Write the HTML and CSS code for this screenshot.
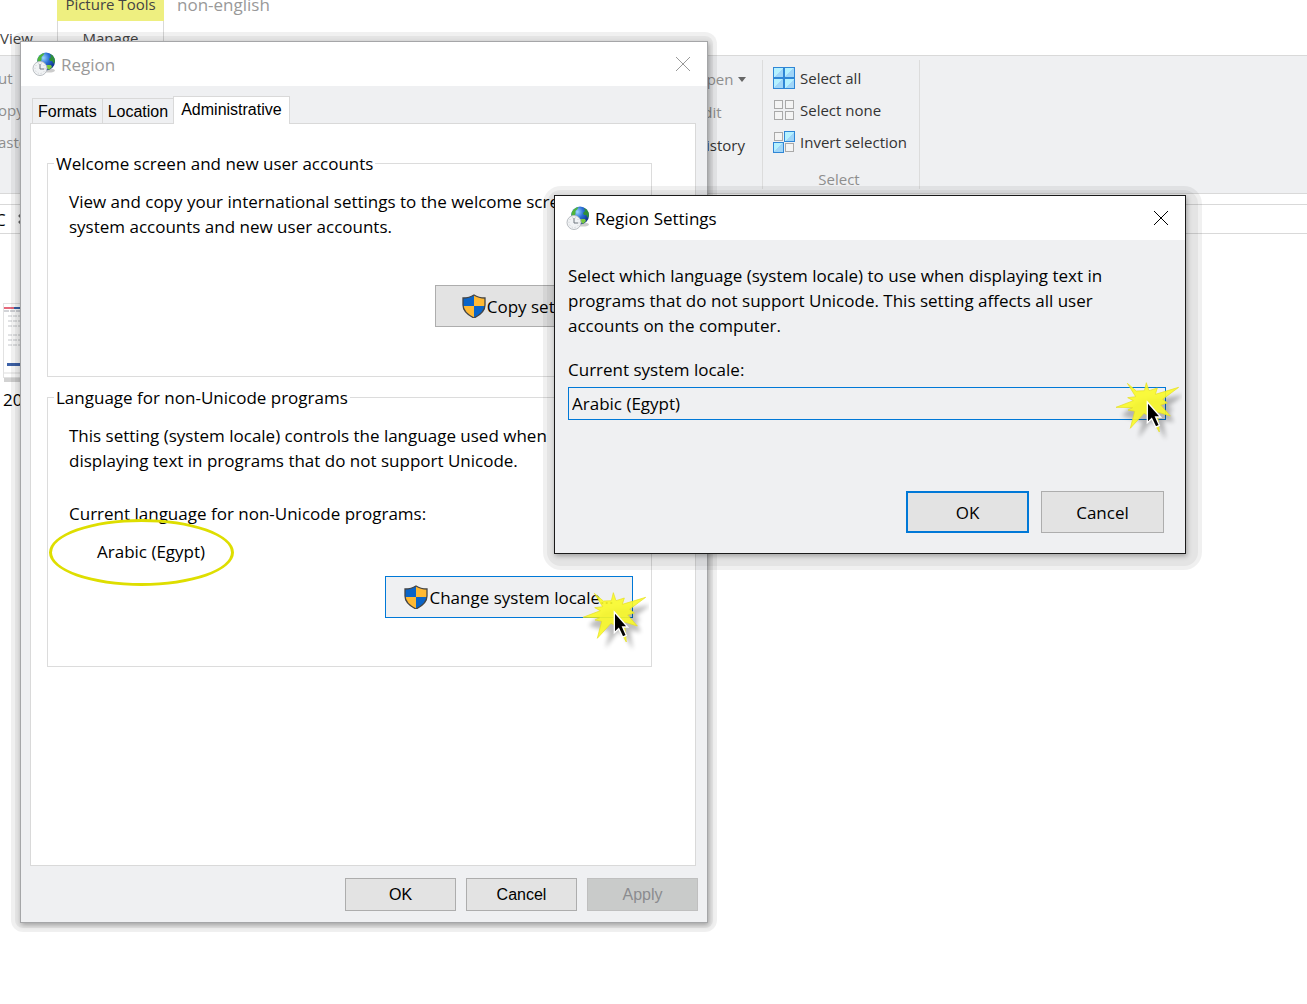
FILE: index.html
```html
<!DOCTYPE html>
<html lang="en">
<head>
    <meta charset="UTF-8">
    <meta name="viewport" content="width=device-width, initial-scale=1.0">
    <title>Region Settings</title>
    <link rel="stylesheet" href="styles.css">
</head>
<body>

    <!-- shared icons -->
    <svg class="defs" width="0" height="0" aria-hidden="true">
        <defs>
            <radialGradient id="sea" cx="0.35" cy="0.3" r="0.75">
                <stop offset="0" stop-color="#9bd6ff"/>
                <stop offset="0.45" stop-color="#2a6fd6"/>
                <stop offset="1" stop-color="#0b2a86"/>
            </radialGradient>
            <linearGradient id="pane" x1="0" y1="0" x2="1" y2="1">
                <stop offset="0.5" stop-color="#b5f1ff"/>
                <stop offset="0.5" stop-color="#9fd5f8"/>
            </linearGradient>
            <symbol id="globe" viewBox="0 0 24 24">
                <ellipse cx="17" cy="18.500" rx="6" ry="2" fill="#000" opacity="0.2"/>
                <circle cx="14" cy="9.500" r="9" fill="url(#sea)"/>
                <path d="M5.500 7c1-3 4-5.500 7-6l-1 2-2 2v3l-2 3-2 1z" fill="#4fb53a"/>
                <path d="M18 2c3 1 5 4 5 7l-1 3-2-3-2 0-1-2 2-2z" fill="#2f8f3a"/>
                <path d="M15 13l4 0 1 2-3 3-2-2z" fill="#79c93f"/>
                <circle cx="8" cy="16.500" r="7" fill="#f1f3f5" stroke="#b9bdc2"/>
                <circle cx="8" cy="16.500" r="5" fill="none" stroke="#c9cdd1" stroke-dasharray="1 2"/>
                <path d="M8 12v5h4" fill="none" stroke="#6f777e"/>
            </symbol>
            <symbol id="shield" viewBox="0 0 24 24">
                <path d="M12 1C9 3 5 4 1 4v7c0 6 5 10 11 13z" fill="#0a64c8"/>
                <path d="M12 1c3 2 7 3 11 3v7c0 6-5 10-11 13z" fill="#ffb933"/>
                <path d="M1 12h11v12C6 21 1 17 1 12z" fill="#ffb933"/>
                <path d="M12 12h11c0 5-5 9-11 12z" fill="#0a64c8"/>
                <path d="M12 1C9 3 5 4 1 4v7c0 6 5 10 11 13 6-3 11-7 11-13V4c-4 0-8-1-11-3z" fill="none" stroke="#454545" stroke-width="1.300"/>
            </symbol>
            <symbol id="cross" viewBox="0 0 16 16">
                <path d="M1 1l14 14M15 1L1 15" fill="none" stroke="currentColor"/>
            </symbol>
            <symbol id="click" viewBox="100 60 210 189">
                <path class="burst-shadow" d="M172 115l45-8 25 0 68-10-45 35 18 10-15 5 14 32-32-6 8 58-25-42-20-12-38 50 12-50-62-18z"/>
                <path d="M146 70l27 23 24-1 6-24 8 24 25-8-6 19 70-21-48 36 14 11-20 6 29 33-39-12 6 60-27-46-19-10-41 45 13-51-20-4 14-7-50-1 52-20-17-9 24-3z" fill="#fafa28" fill-opacity="0.9" stroke="#e6e01a" stroke-width="2"/>
                <path d="M206 126v62l13-12 12 25 11-5-11-25h15z" fill="#000" stroke="#fff" stroke-width="4"/>
            </symbol>
        </defs>
    </svg>

    <div class="explorer">
        <div class="explorer-tabs">
            <a href="#" class="view-tab">View</a>
            <div class="picture-tools">
                <div class="tools-label">Picture Tools</div>
                <a href="#" class="manage-tab">Manage</a>
            </div>
            <div class="explorer-title">non-english</div>
        </div>

        <div class="ribbon">
            <div class="ribbon-clipboard">
                <button type="button" class="ribbon-btn muted">ut</button>
                <button type="button" class="ribbon-btn muted">opy</button>
                <button type="button" class="ribbon-btn muted">aste</button>
            </div>
            <div class="ribbon-open">
                <button type="button" class="ribbon-btn muted">Open <span class="caret"></span></button>
                <button type="button" class="ribbon-btn muted">Edit</button>
                <button type="button" class="ribbon-btn">History</button>
            </div>
            <div class="ribbon-select">
                <button type="button" class="ribbon-btn">
                    <svg width="22" height="22" viewBox="0 0 22 22">
                        <g fill="url(#pane)" stroke="#2f86d6">
                            <rect x="0.500" y="0.500" width="10" height="10"/>
                            <rect x="11.500" y="0.500" width="10" height="10"/>
                            <rect x="0.500" y="11.500" width="10" height="10"/>
                            <rect x="11.500" y="11.500" width="10" height="10"/>
                        </g>
                    </svg>
                    Select all
                </button>
                <button type="button" class="ribbon-btn">
                    <svg width="22" height="22" viewBox="0 0 22 22">
                        <g fill="#f4f4f4" stroke="#a9a9a9">
                            <rect x="1.500" y="1.500" width="8" height="8"/>
                            <rect x="12.500" y="1.500" width="8" height="8"/>
                            <rect x="1.500" y="12.500" width="8" height="8"/>
                            <rect x="12.500" y="12.500" width="8" height="8"/>
                        </g>
                    </svg>
                    Select none
                </button>
                <button type="button" class="ribbon-btn">
                    <svg width="22" height="22" viewBox="0 0 22 22">
                        <g fill="#f4f4f4" stroke="#a9a9a9">
                            <rect x="1.500" y="1.500" width="8" height="8"/>
                            <rect x="12.500" y="12.500" width="8" height="8"/>
                        </g>
                        <g fill="url(#pane)" stroke="#2f86d6">
                            <rect x="11.500" y="0.500" width="10" height="10"/>
                            <rect x="0.500" y="11.500" width="10" height="10"/>
                        </g>
                    </svg>
                    Invert selection
                </button>
                <div class="ribbon-caption">Select</div>
            </div>
        </div>

        <div class="address-bar">
            <span>C</span>
            <svg width="10" height="10" viewBox="0 0 10 10"><path d="M1 1l8 8M9 1L1 9" stroke="#666" stroke-width="2.500"/></svg>
        </div>

        <div class="files">
            <svg class="thumb" width="56" height="80" viewBox="0 0 56 80">
                <rect x="1" y="3" width="54" height="76" fill="#d2d2d2"/>
                <rect x="0.500" y="0.500" width="53" height="74" fill="#fff" stroke="#e2e2e2"/>
                <path d="M1 5h10" stroke="#e66a7c" stroke-width="2"/>
                <path d="M11 5h36" stroke="#3a63a8" stroke-width="2"/>
                <path d="M1 8h50" stroke="#a5a8b0" stroke-dasharray="5 1"/>
                <path d="M5 13h40M5 18h40M5 23h40M5 32h40M5 37h40M5 42h40" stroke="#c4c6ca" stroke-dasharray="4 1"/>
                <rect x="4" y="60" width="46" height="3" fill="#3d62a8"/>
                <path d="M1 70h52" stroke="#ddd"/>
            </svg>
            <span>2019</span>
        </div>
    </div>

    <div class="dialog region-dialog">
        <div class="window">
            <div class="title-bar">
                <svg width="24" height="24"><use href="#globe"/></svg>
                <h1>Region</h1>
                <button type="button" class="close-btn" aria-label="Close"><svg width="16" height="16"><use href="#cross"/></svg></button>
            </div>

            <form class="region-body">
                <div class="tabs">
                    <button type="button" class="tab">Formats</button>
                    <button type="button" class="tab">Location</button>
                    <button type="button" class="tab active">Administrative</button>
                </div>

                <div class="panel">
                    <fieldset>
                        <legend>Welcome screen and new user accounts</legend>
                        <p>View and copy your international settings to the welcome screen,<br>system accounts and new user accounts.</p>
                        <div class="action copy-action">
                            <button type="button" class="btn shield-btn copy-btn"><svg width="24" height="24"><use href="#shield"/></svg>Copy settings...</button>
                        </div>
                    </fieldset>

                    <fieldset>
                        <legend>Language for non-Unicode programs</legend>
                        <p>This setting (system locale) controls the language used when<br>displaying text in programs that do not support Unicode.</p>
                        <p class="current-label">Current language for non-Unicode programs:</p>
                        <p class="current-language">Arabic (Egypt)<span class="ring"></span></p>
                        <div class="action">
                            <button type="button" class="btn shield-btn change-btn"><svg width="24" height="24"><use href="#shield"/></svg>Change system locale...</button>
                            <svg class="click-mark" width="70" height="63"><use href="#click"/></svg>
                        </div>
                    </fieldset>
                </div>

                <div class="region-buttons">
                    <button type="button" class="btn">OK</button>
                    <button type="button" class="btn">Cancel</button>
                    <button type="button" class="btn" disabled>Apply</button>
                </div>
            </form>
        </div>
    </div>

    <div class="dialog settings-dialog">
        <div class="window">
            <div class="title-bar">
                <svg width="24" height="24"><use href="#globe"/></svg>
                <h2>Region Settings</h2>
                <button type="button" class="close-btn" aria-label="Close"><svg width="16" height="16"><use href="#cross"/></svg></button>
            </div>

            <form class="settings-body">
                <p>Select which language (system locale) to use when displaying text in<br>programs that do not support Unicode. This setting affects all user<br>accounts on the computer.</p>
                <label for="locale">Current system locale:</label>
                <div class="locale-field">
                    <select id="locale">
                        <option>Arabic (Egypt)</option>
                    </select>
                    <svg class="click-mark" width="70" height="63"><use href="#click"/></svg>
                </div>
                <div class="settings-buttons">
                    <button type="button" class="btn default">OK</button>
                    <button type="button" class="btn">Cancel</button>
                </div>
            </form>
        </div>
    </div>

</body>
</html>
```
FILE: styles.css
```css
* {
    box-sizing: border-box;
    margin: 0;
    padding: 0;
}

body {
    position: relative;
    min-height: 100vh;
    overflow: hidden;
    background: #fff;
    color: #000;
    font-family: 'Open Sans', 'Noto Sans', sans-serif;
    font-size: 17px;
    line-height: 25px;
}

button,
select {
    font: inherit;
    color: inherit;
}

svg {
    display: block;
    flex: none;
}

a {
    color: inherit;
    text-decoration: none;
}

.defs {
    position: absolute;
}

/* file explorer */
.explorer-tabs {
    display: flex;
    height: 55px;
    font-size: 15px;
    color: #444;
}

.view-tab {
    width: 57px;
    padding-top: 26px;
}

.picture-tools {
    width: 107px;
    text-align: center;
}

.tools-label {
    height: 21px;
    background: #eeef80;
    line-height: 8px;
}

.manage-tab {
    display: block;
    height: 34px;
    padding-top: 5px;
    border: solid #d9d9d9;
    border-width: 0 1px;
}

.explorer-title {
    padding-left: 13px;
    color: #999;
    font-size: 17px;
    line-height: 10px;
}

.ribbon {
    display: flex;
    height: 139px;
    background: #eff0f2;
    border: solid #d9d9d9;
    border-width: 1px 0;
    color: #333;
    font-size: 15px;
}

.ribbon-clipboard {
    width: 695px;
    padding-top: 6px;
}

.ribbon-clipboard .ribbon-btn {
    margin-left: -2px;
}

.ribbon-open {
    width: 68px;
    margin: 4px 0;
    padding-top: 3px;
    border-right: 1px solid #dcdcdc;
}

.ribbon-open .ribbon-btn {
    height: 33px;
}

.ribbon-select {
    width: 157px;
    margin: 4px 0;
    padding: 2px 0 0 10px;
    border-right: 1px solid #dcdcdc;
}

.ribbon-btn {
    display: flex;
    align-items: center;
    gap: 5px;
    height: 32px;
    background: none;
    border: none;
    white-space: nowrap;
}

.ribbon-btn.muted,
.ribbon-caption {
    color: #8e8e8e;
}

.ribbon-caption {
    padding: 11px 14px 0 0;
    text-align: center;
    line-height: 20px;
}

.caret {
    border: 4px solid transparent;
    border-top: 5px solid #666;
    border-bottom: none;
}

.address-bar {
    display: flex;
    align-items: center;
    gap: 12px;
    height: 30px;
    margin-top: 10px;
    border: solid #d9d9d9;
    border-width: 1px 0;
}

.address-bar span {
    margin-left: -5px;
}

.files {
    padding: 69px 3px;
}

.files span {
    display: block;
    padding-top: 4px;
}

/* dialogs, each with a two-step halo around its window */
.dialog {
    position: absolute;
    border: 4px solid transparent;
    border-radius: 12px;
    background:
        linear-gradient(rgba(0, 0, 0, 0.05), rgba(0, 0, 0, 0.05)) padding-box,
        linear-gradient(rgba(0, 0, 0, 0.06), rgba(0, 0, 0, 0.06)) border-box;
}

.window {
    background: #eff0f2;
    border: 1px solid #a5a6a8;
    box-shadow: 1px 2px 5px rgba(0, 0, 0, 0.3);
}

.title-bar {
    display: flex;
    align-items: center;
    gap: 5px;
    height: 44px;
    padding: 0 16px 0 11px;
    background: #fff;
}

.title-bar h1,
.title-bar h2 {
    flex: 1;
    font-size: 17px;
    font-weight: 400;
}

.close-btn {
    background: none;
    border: none;
}

.btn {
    background: #e3e3e3;
    border: 1px solid #adadad;
}

.region-dialog {
    top: 32px;
    left: 11px;
    width: 706px;
    padding: 5px;
}

.region-dialog .title-bar {
    color: #999;
}

.region-body {
    padding: 10px 9px 11px;
}

.tabs {
    display: flex;
    align-items: flex-end;
    padding-left: 2px;
    font-family: 'Liberation Sans', Arial, sans-serif;
    font-size: 16px;
}

.tab {
    height: 25px;
    padding: 0 5px;
    background: #eff0f2;
    border: 1px solid #d9d9d9;
    border-width: 1px 0 0 1px;
}

.tab.active {
    position: relative;
    height: 28px;
    margin-bottom: -1px;
    padding: 0 7px 2px;
    background: #fff;
    border-width: 1px 1px 0;
}

.panel {
    min-height: 743px;
    margin-right: 2px;
    padding: 27px 43px 27px 16px;
    background: #fff;
    border: 1px solid #d9d9d9;
}

fieldset {
    min-width: 0;
    margin-bottom: 8px;
    padding: 13px 18px 49px 21px;
    border: 1px solid #dcdcdc;
}

fieldset + fieldset {
    padding-bottom: 48px;
}

legend {
    margin-left: -15px;
    padding: 0 2px;
}

fieldset p {
    white-space: nowrap;
}

.action {
    position: relative;
    display: flex;
    justify-content: flex-end;
    margin-top: 12px;
}

.copy-action {
    margin-top: 46px;
}

.shield-btn {
    display: flex;
    align-items: center;
    justify-content: center;
    gap: 1px;
    height: 42px;
    white-space: nowrap;
}

.copy-btn {
    width: 198px;
}

.change-btn {
    width: 248px;
    background: #eff0f2;
    border-color: #0078d7;
}

.current-label {
    margin-top: 28px;
}

.current-language {
    position: relative;
    margin-top: 13px;
    padding-left: 28px;
}

.ring {
    position: absolute;
    top: -20px;
    left: -20px;
    width: 185px;
    height: 67px;
    border: 3px solid #dede00;
    border-radius: 50%;
}

.click-mark {
    position: absolute;
    right: -16px;
    bottom: -35px;
    overflow: visible;
    pointer-events: none;
}

.burst-shadow {
    fill: #000;
    opacity: 0.25;
    filter: blur(6px);
    transform: translate(4px, 8px);
}

.region-buttons {
    display: flex;
    justify-content: flex-end;
    gap: 10px;
    margin-top: 12px;
    font-family: 'Liberation Sans', Arial, sans-serif;
    font-size: 16px;
}

.region-buttons .btn {
    width: 111px;
    height: 33px;
}

.btn:disabled {
    background: #c9cbca;
    border-color: #bfbfbf;
    color: #8b8b8f;
}

.settings-dialog {
    top: 186px;
    left: 543px;
    width: 659px;
    padding: 5px 12px 12px 7px;
    border-radius: 18px;
}

.settings-dialog .window {
    border-color: #1a1a1a;
}

.settings-body {
    padding: 23px 19px 20px 13px;
}

.settings-body p {
    white-space: nowrap;
}

.settings-body label {
    display: block;
    margin-top: 19px;
}

.locale-field {
    position: relative;
    margin-top: 5px;
}

.locale-field .click-mark {
    bottom: -23px;
}

.locale-field select {
    display: block;
    width: 100%;
    height: 33px;
    padding: 0 3px;
    appearance: none;
    background: #eff0f2;
    border: 1px solid #0078d7;
    border-radius: 0;
}

.settings-buttons {
    display: flex;
    justify-content: flex-end;
    gap: 12px;
    margin: 71px 2px 0 0;
}

.settings-buttons .btn {
    width: 123px;
    height: 42px;
}

.btn.default {
    border: 2px solid #0078d7;
}
```
